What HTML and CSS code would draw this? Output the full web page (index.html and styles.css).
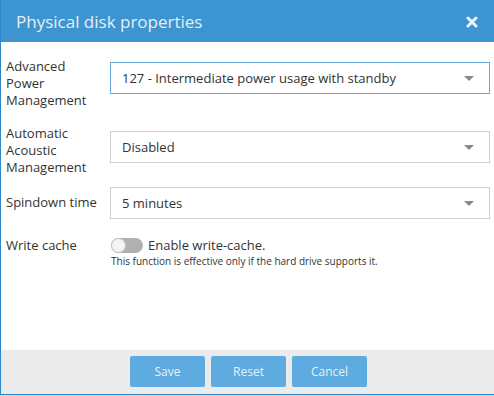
FILE: index.html
```html
<!DOCTYPE html>
<html lang="en">
<head>
  <meta charset="UTF-8">
  <title>Physical disk properties</title>
  <link rel="stylesheet" href="styles.css">
</head>
<body>
  <div class="dialog">
    <div class="header">
      <span class="title">Physical disk properties</span>
      <svg class="close" width="12" height="12" viewBox="0 0 12 12">
        <path d="M2 2 L10 10 M10 2 L2 10" stroke="#eaf2fa" stroke-width="3" stroke-linecap="round"/>
      </svg>
    </div>
    <div class="content">
      <div class="row row-apm">
        <div class="label">Advanced<br>Power<br>Management</div>
        <div class="select focused">127 - Intermediate power usage with standby<span class="caret"></span></div>
      </div>
      <div class="row row-aam">
        <div class="label">Automatic<br>Acoustic<br>Management</div>
        <div class="select">Disabled<span class="caret"></span></div>
      </div>
      <div class="row row-spin">
        <div class="label single">Spindown time</div>
        <div class="select">5 minutes<span class="caret"></span></div>
      </div>
      <div class="row row-cache">
        <div class="label">Write cache</div>
        <div class="field">
          <div class="check"><span class="toggle"><span class="knob"></span></span>Enable write-cache.</div>
          <div class="hint">This function is effective only if the hard drive supports it.</div>
        </div>
      </div>
    </div>
    <div class="footer">
      <button class="button">Save</button>
      <button class="button">Reset</button>
      <button class="button">Cancel</button>
    </div>
  </div>
</body>
</html>
```
FILE: styles.css
```css
body {
  margin: 0;
  background-color: #d6d6d6;
  font-family: 'Open Sans', sans-serif;
  color: #333;
}

.dialog {
  width: 493px;
  height: 394px;
  background-color: #fff;
  border-left: 1px solid #2f86c8;
  border-bottom: 1px solid #2f86c8;
  display: flex;
  flex-direction: column;
}

.header {
  height: 42px;
  background-color: #3c95d0;
  display: flex;
  align-items: center;
  justify-content: space-between;
  padding: 0 16px 0 15px;
  flex-shrink: 0;
}

.title {
  color: #e6eef6;
  font-size: 17px;
}

.close {
  margin-top: 1px;
}

.content {
  flex: 1;
  padding: 16px 4px 0 5px;
}

.row {
  display: flex;
  align-items: flex-start;
}

.label {
  width: 104px;
  flex-shrink: 0;
  font-size: 13px;
  line-height: 17px;
}

.row-apm .select {
  margin-top: 4px;
}

.row-aam {
  margin-top: 16px;
}

.row-aam .select {
  margin-top: 6px;
}

.row-spin {
  margin-top: 11px;
}

.label.single {
  padding-top: 7px;
}

.row-cache {
  margin-top: 18px;
}

.select {
  flex: 1;
  height: 30px;
  border: 1px solid #cfcfcf;
  padding: 0 11px;
  font-size: 13px;
  line-height: 30px;
  display: flex;
  justify-content: space-between;
  align-items: center;
  color: #333;
}

.select.focused {
  border-color: #63aade;
}

.caret {
  width: 0;
  height: 0;
  border-left: 5px solid transparent;
  border-right: 5px solid transparent;
  border-top: 5px solid #8a8a8a;
  margin-right: 4px;
}

.field {
  flex: 1;
  padding-left: 1px;
}

.check {
  display: flex;
  align-items: center;
  font-size: 13px;
  line-height: 17px;
}

.toggle {
  width: 32px;
  height: 15px;
  border-radius: 8px;
  background-color: #b0b0b0;
  margin-right: 5px;
  position: relative;
}

.knob {
  position: absolute;
  left: 0;
  top: 0;
  width: 13px;
  height: 13px;
  border-radius: 50%;
  background-color: #f4f4f4;
  border: 1px solid #c4c4c4;
}

.hint {
  font-size: 10px;
  line-height: 14px;
}

.footer {
  height: 44px;
  background-color: #ebebeb;
  display: flex;
  justify-content: center;
  align-items: flex-start;
  gap: 6px;
  padding: 6px 0 0 2px;
  box-sizing: border-box;
  flex-shrink: 0;
}

.button {
  width: 75px;
  height: 31px;
  border: none;
  border-radius: 2px;
  background-color: #5eabdf;
  color: #e8f1f9;
  font-family: 'Open Sans', sans-serif;
  font-size: 12px;
}
```
